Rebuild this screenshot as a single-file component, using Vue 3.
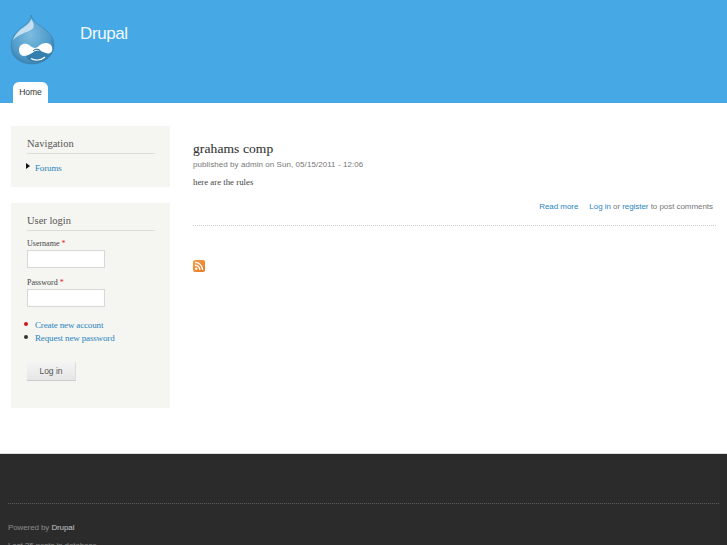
<script setup>
const meta = 'published by admin on Sun, 05/15/2011 - 12:06'
</script>

<template>
  <div class="page">
    <header class="header">
      <div class="brand">
        <svg class="logo" width="46" height="50" viewBox="0 0 46 50">
          <defs>
            <radialGradient id="drop" cx="0.45" cy="0.4" r="0.7">
              <stop offset="0" stop-color="#7cbce0" />
              <stop offset="0.65" stop-color="#4f9bca" />
              <stop offset="1" stop-color="#2f749f" />
            </radialGradient>
          </defs>
          <path d="M21 0C21 6 16 9 11 13C5 18 1 23 1 31C1 42 10 49 22 49C34 49 44 41 44 30C44 21 37 16 32 12C27 9 23 6 21 0Z" fill="url(#drop)" stroke="#3a80ad" stroke-width="0.6" />
          <path d="M21 4C20 9 14 12 10 15C7 18 4 21 3 25C8 20 14 18 19 16C25 14 25 9 21 4Z" fill="#d3e9f5" opacity="0.85" />
          <ellipse cx="27" cy="41" rx="11" ry="6" fill="#357fae" />
          <path d="M9 35C9 30 13 28 17 29C20 30 22 33 25 33C28 33 30 28 36 28C41 28 43 32 42 36C41 39 37 39 33 37C30 35.5 28 35 25 36C22 38 18 41 14 41C11 41 9 38 9 35Z" fill="#fff" />
          <path d="M21 43.5C25 46 31 45.5 35 42" fill="none" stroke="#fff" stroke-width="1.2" />
          <path d="M23 36C25 33.5 29 33.5 31 36.5" fill="none" stroke="#1f5f8a" stroke-width="1" />
        </svg>
        <span class="site-name">Drupal</span>
      </div>
      <nav class="tabs">
        <a class="tab">Home</a>
      </nav>
    </header>

    <main class="main">
      <aside class="sidebar">
        <section class="block nav-block">
          <h2 class="block-title">Navigation</h2>
          <ul class="menu">
            <li class="menu-item"><span class="arrow"></span><a class="serif-link">Forums</a></li>
          </ul>
        </section>

        <section class="block login-block">
          <h2 class="block-title">User login</h2>
          <label class="field-label">Username <span class="req">*</span></label>
          <input class="field" type="text" />
          <label class="field-label second">Password <span class="req">*</span></label>
          <input class="field" type="password" />
          <ul class="links">
            <li><span class="dot red"></span><a class="serif-link">Create new account</a></li>
            <li><span class="dot"></span><a class="serif-link">Request new password</a></li>
          </ul>
          <button class="login-btn" type="button">Log in</button>
        </section>
      </aside>

      <section class="content">
        <article class="node">
          <h1 class="node-title">grahams comp</h1>
          <div class="meta">{{ meta }}</div>
          <p class="body">here are the rules</p>
          <div class="node-links">
            <a class="link read-more">Read more</a>
            <span><a class="link">Log in</a> or <a class="link">register</a> to post comments</span>
          </div>
        </article>
        <svg class="rss" width="12" height="12" viewBox="0 0 12 12">
          <defs>
            <linearGradient id="rssbg" x1="0" y1="0" x2="1" y2="1">
              <stop offset="0" stop-color="#f5a04e" />
              <stop offset="1" stop-color="#e87a1f" />
            </linearGradient>
          </defs>
          <rect width="12" height="12" rx="2" fill="url(#rssbg)" />
          <circle cx="3.2" cy="8.8" r="1.2" fill="#fff" />
          <path d="M2 5.2A4.8 4.8 0 0 1 6.8 10M2 2.4A7.6 7.6 0 0 1 9.6 10" fill="none" stroke="#fff" stroke-width="1.4" />
        </svg>
      </section>
    </main>

    <footer class="footer">
      <div class="powered">Powered by <a class="footer-link">Drupal</a></div>
      <div class="footer-extra">Last 25 posts in database</div>
    </footer>
  </div>
</template>

<style>
html, body {
  margin: 0;
  height: 545px;
  overflow: hidden;
  background: #fff;
}
</style>

<style scoped>
.page {
  width: 727px;
  height: 545px;
  overflow: hidden;
  display: flex;
  flex-direction: column;
  font-family: "Liberation Sans", Arial, sans-serif;
  color: #666;
}
.header {
  height: 103px;
  flex: none;
  background: #47a8e6;
  display: flex;
  flex-direction: column;
  justify-content: space-between;
  box-sizing: border-box;
  padding: 15px 0 0 10px;
}
.brand {
  display: flex;
  align-items: flex-start;
}
.logo {
  display: block;
}
.site-name {
  margin: 9px 0 0 24px;
  font-size: 17px;
  line-height: 20px;
  letter-spacing: -0.4px;
  color: #f2f9fe;
}
.tabs {
  display: flex;
  padding-left: 3px;
}
.tab {
  width: 35px;
  height: 21px;
  box-sizing: border-box;
  background: #fff;
  border-radius: 6px 6px 0 0;
  color: #333;
  font-size: 8.5px;
  line-height: 20px;
  text-align: center;
}
.main {
  height: 351px;
  flex: none;
  display: flex;
  background: #fff;
}
.sidebar {
  width: 159px;
  margin: 23px 0 0 11px;
  flex: none;
  display: flex;
  flex-direction: column;
  gap: 16px;
}
.block {
  background: #f5f5f1;
  box-sizing: border-box;
  padding: 10px 15px 0 16px;
}
.nav-block {
  height: 61px;
}
.login-block {
  height: 205px;
}
.block-title {
  margin: 0;
  height: 17px;
  font-family: "Liberation Serif", "Times New Roman", serif;
  font-size: 10.5px;
  line-height: 16px;
  font-weight: normal;
  color: #555;
  border-bottom: 1px solid #dcdcd8;
}
.menu, .links {
  list-style: none;
  margin: 0;
  padding: 0;
}
.menu-item {
  position: relative;
  margin-top: 6px;
  padding-left: 8px;
  line-height: 12px;
}
.arrow {
  position: absolute;
  left: -1px;
  top: 3px;
  border-left: 4px solid #111;
  border-top: 3px solid transparent;
  border-bottom: 3px solid transparent;
}
.serif-link {
  font-family: "Liberation Serif", "Times New Roman", serif;
  font-size: 9px;
  letter-spacing: -0.15px;
  color: #2a85c0;
}
.field-label {
  display: block;
  margin-top: 5px;
  height: 14px;
  font-family: "Liberation Serif", "Times New Roman", serif;
  font-size: 8px;
  line-height: 16px;
  color: #444;
}
.field-label.second {
  margin-top: 7px;
}
.req {
  color: #e22;
}
.field {
  display: block;
  width: 78px;
  height: 18px;
  box-sizing: border-box;
  background: #fff;
  border: 1px solid #d8d8d4;
  box-shadow: inset 0 0 1px #e4e4e4;
  padding: 0;
  margin: 0;
}
.links {
  margin-top: 9px;
}
.links li {
  position: relative;
  height: 13px;
  line-height: 13px;
  padding-left: 8px;
}
.dot {
  position: absolute;
  left: -3px;
  top: 6px;
  width: 4px;
  height: 4px;
  border-radius: 50%;
  background: #333;
}
.dot.red {
  background: #d01320;
}
.login-btn {
  display: block;
  margin-top: 20px;
  width: 49px;
  height: 19px;
  padding: 0;
  background: linear-gradient(#f4f4f4, #e6e6e6);
  border: 0;
  border-bottom: 1px solid #ccc;
  border-right: 1px solid #ddd;
  color: #555;
  font-family: "Liberation Sans", Arial, sans-serif;
  font-size: 8.5px;
}
.content {
  flex: 1;
  margin: 0 11px 0 23px;
  padding-top: 38px;
  min-width: 0;
}
.node {
  height: 84px;
  border-bottom: 1px dotted #ccc;
}
.node-title {
  margin: 0;
  font-family: "Liberation Serif", "Times New Roman", serif;
  font-size: 13.5px;
  line-height: 16px;
  font-weight: normal;
  letter-spacing: 0.1px;
  color: #333;
  -webkit-text-stroke: 0.1px #333;
}
.meta {
  margin-top: 2px;
  font-size: 8px;
  line-height: 12px;
  letter-spacing: 0.06px;
  color: #777;
}
.body {
  margin: 5px 0 0;
  font-family: "Liberation Serif", "Times New Roman", serif;
  font-size: 8.8px;
  line-height: 12px;
  color: #444;
}
.node-links {
  margin-top: 13px;
  padding-right: 3px;
  display: flex;
  justify-content: flex-end;
  gap: 11px;
  font-size: 8px;
  line-height: 12px;
  letter-spacing: -0.05px;
  color: #777;
}
.link {
  color: #2a85c0;
}
.rss {
  display: block;
  margin-top: 34px;
}
.footer {
  flex: 1;
  background: #2b2b2b;
  border-top: 1px solid #ddd;
  box-sizing: border-box;
  margin-top: -1px;
  padding: 0 8px;
  overflow: hidden;
  font-size: 8px;
  letter-spacing: -0.1px;
  line-height: 12px;
  color: #8b8b8b;
}
.powered {
  margin-top: 49px;
  padding-top: 18px;
  border-top: 1px dotted #5c5c5c;
}
.footer-link {
  color: #c6c6c6;
}
.footer-extra {
  margin-top: 6px;
}
</style>
